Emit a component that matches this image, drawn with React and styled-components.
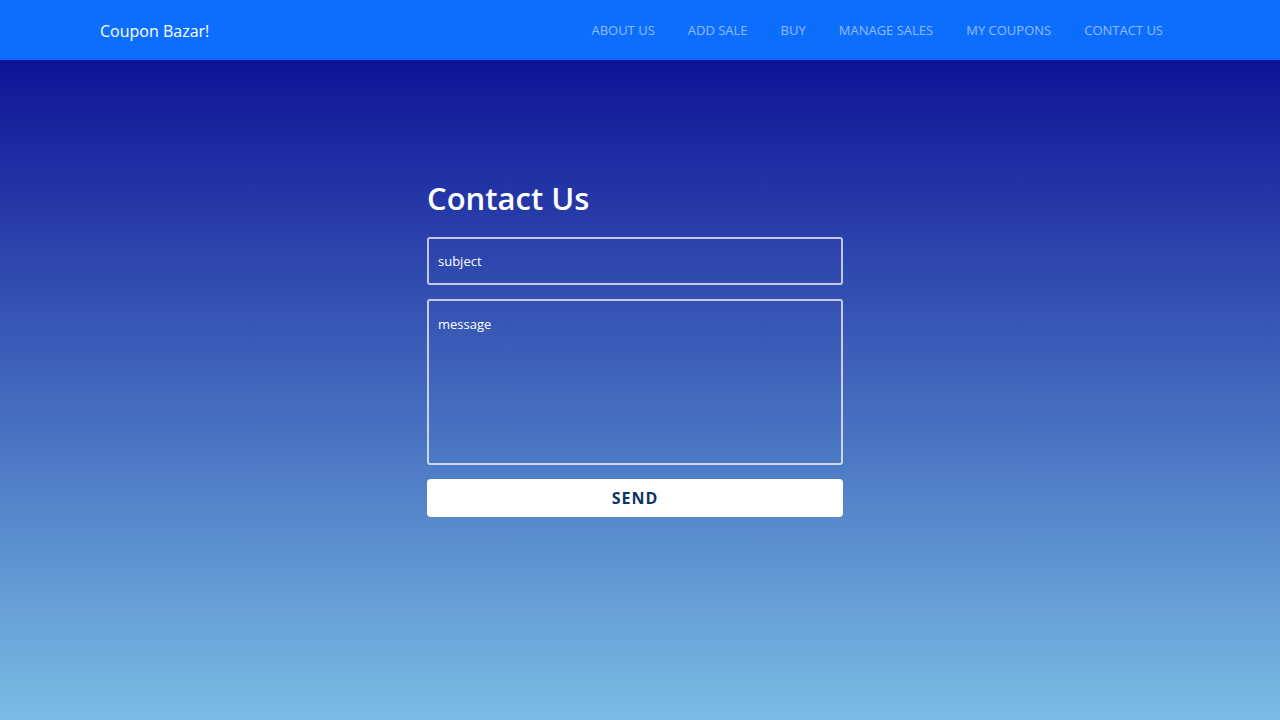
import React from "react";
import styled, { createGlobalStyle } from "styled-components";

const GlobalStyle = createGlobalStyle`
    html, body {
        margin: 0;
        padding: 0;
    }
    body {
        font-family: "Open Sans", "Noto Sans", sans-serif;
    }
`;

const Page = styled.div`
    display: flex;
    flex-direction: column;
    height: 720px;
`;

const NavBar = styled.nav`
    height: 60px;
    flex-shrink: 0;
    background: #0d6efd;
    display: flex;
    align-items: center;
    justify-content: space-between;
    padding: 0 100px;
    box-sizing: border-box;
`;

const Brand = styled.a`
    color: #fff;
    font-size: 16px;
    text-decoration: none;
    padding-top: 1px;
`;

const NavList = styled.div`
    display: flex;
    align-items: center;
    gap: 33px;
    padding-right: 17px;
`;

const NavItem = styled.a`
    color: rgba(255, 255, 255, 0.55);
    font-size: 13px;
    text-transform: uppercase;
    text-decoration: none;
`;

const Main = styled.main`
    flex: 1;
    background: linear-gradient(180deg, #0f1396 0%, #4c78c4 60%, #7bbde4 100%);
    display: flex;
    justify-content: center;
    padding-top: 116px;
    box-sizing: border-box;
`;

const Form = styled.form`
    width: 416px;
    margin-right: 10px;
    display: flex;
    flex-direction: column;
    gap: 14px;
`;

const Title = styled.h1`
    margin: 0 0 3px;
    color: #fff;
    font-size: 31px;
    font-weight: 600;
    line-height: 44px;
`;

const field = `
    width: 100%;
    box-sizing: border-box;
    background: transparent;
    border: 2px solid rgba(255, 255, 255, 0.7);
    border-radius: 3px;
    color: #fff;
    font-family: "Open Sans", "Noto Sans", sans-serif;
    font-size: 13px;
    padding: 0 9px;
    outline: none;
    &::placeholder {
        color: #fff;
        opacity: 1;
    }
`;

const Input = styled.input`
    ${field}
    height: 48px;
`;

const TextArea = styled.textarea`
    ${field}
    height: 166px;
    padding-top: 14px;
    resize: none;
`;

const SendButton = styled.button`
    height: 38px;
    border: none;
    border-radius: 4px;
    background: #fff;
    color: #0b3466;
    font-family: "Open Sans", "Noto Sans", sans-serif;
    font-size: 16px;
    font-weight: 700;
    letter-spacing: 1px;
    text-transform: uppercase;
    cursor: pointer;
`;

const links = ["About us", "Add sale", "Buy", "Manage sales", "My coupons", "Contact us"];

function App() {
    return (
        <>
            <GlobalStyle />
            <Page>
                <NavBar>
                    <Brand href="#">Coupon Bazar!</Brand>
                    <NavList>
                        {links.map((l) => (
                            <NavItem key={l} href="#">
                                {l}
                            </NavItem>
                        ))}
                    </NavList>
                </NavBar>
                <Main>
                    <Form onSubmit={(e) => e.preventDefault()}>
                        <Title>Contact Us</Title>
                        <Input placeholder="subject" />
                        <TextArea placeholder="message" />
                        <SendButton type="submit">Send</SendButton>
                    </Form>
                </Main>
            </Page>
        </>
    );
}

export default App;
